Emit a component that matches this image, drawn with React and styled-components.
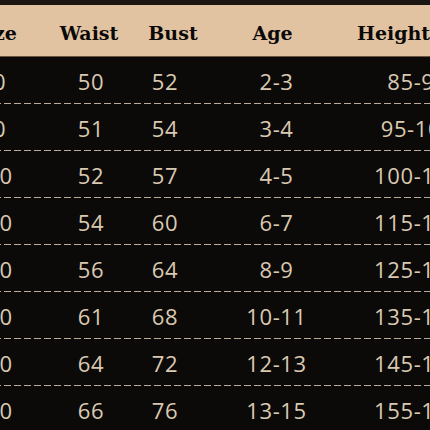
import React from "react";
import styled, { createGlobalStyle } from "styled-components";

const GlobalStyle = createGlobalStyle`
  html, body {
    margin: 0;
    padding: 0;
    background-color: #0c0a09;
  }
`;

const Page = styled.div`
  width: 430px;
  height: 430px;
  overflow: hidden;
  background-color: #0c0a09;
  padding-top: 5px;
  box-sizing: border-box;
  position: relative;
`;

const TopStrip = styled.div`
  height: 5px;
  margin-top: -5px;
  background-color: #1b1613;
`;

const Table = styled.div`
  margin-left: -56px;
  width: 528px;
  display: flex;
  flex-direction: column;
`;

const cols = "98px 98px 50px 173px 109px";

const HeaderRow = styled.div`
  display: grid;
  grid-template-columns: ${cols};
  height: 52px;
  align-items: center;
  background-color: #e1c3a2;
  border-bottom: 1px solid #6b5541;
  box-sizing: border-box;
`;

const HeadCell = styled.div`
  text-align: center;
  white-space: nowrap;
  font-family: "DejaVu Serif", "Liberation Serif", serif;
  font-weight: 700;
  font-size: 19px;
  color: #0b0908;
  padding-top: 4px;
  transform: translateX(${(p) => p.$shift || 0}px);
`;

const Row = styled.div`
  display: grid;
  grid-template-columns: ${cols};
  height: 47px;
  align-items: center;
  background-image: repeating-linear-gradient(
    to right,
    #b9ab9a 0 7px,
    transparent 7px 10px
  );
  background-size: 100% 1px;
  background-position: left bottom;
  background-repeat: no-repeat;
  box-sizing: border-box;
`;

const Cell = styled.div`
  text-align: center;
  white-space: nowrap;
  font-family: "Open Sans", "Noto Sans", sans-serif;
  font-weight: 400;
  font-size: 22px;
  letter-spacing: 0.6px;
  color: #dac9b1;
`;

const headers = [
  { label: "Size", shift: 2 },
  { label: "Waist", shift: -2 },
  { label: "Bust", shift: 8 },
  { label: "Age", shift: -4 },
  { label: "Height(cm)", shift: -6 },
];

const rows = [
  ["80", "50", "52", "2-3", "85-95"],
  ["90", "51", "54", "3-4", "95-105"],
  ["100", "52", "57", "4-5", "100-110"],
  ["110", "54", "60", "6-7", "115-125"],
  ["120", "56", "64", "8-9", "125-135"],
  ["130", "61", "68", "10-11", "135-145"],
  ["140", "64", "72", "12-13", "145-155"],
  ["150", "66", "76", "13-15", "155-165"],
];

const App = () => {
  return (
    <>
      <GlobalStyle />
      <Page>
        <TopStrip />
        <Table>
          <HeaderRow>
            {headers.map((h) => (
              <HeadCell key={h.label} $shift={h.shift}>
                {h.label}
              </HeadCell>
            ))}
          </HeaderRow>
          {rows.map((r, i) => (
            <Row key={i}>
              {r.map((v, j) => (
                <Cell key={j}>{v}</Cell>
              ))}
            </Row>
          ))}
        </Table>
      </Page>
    </>
  );
};

export default App;
